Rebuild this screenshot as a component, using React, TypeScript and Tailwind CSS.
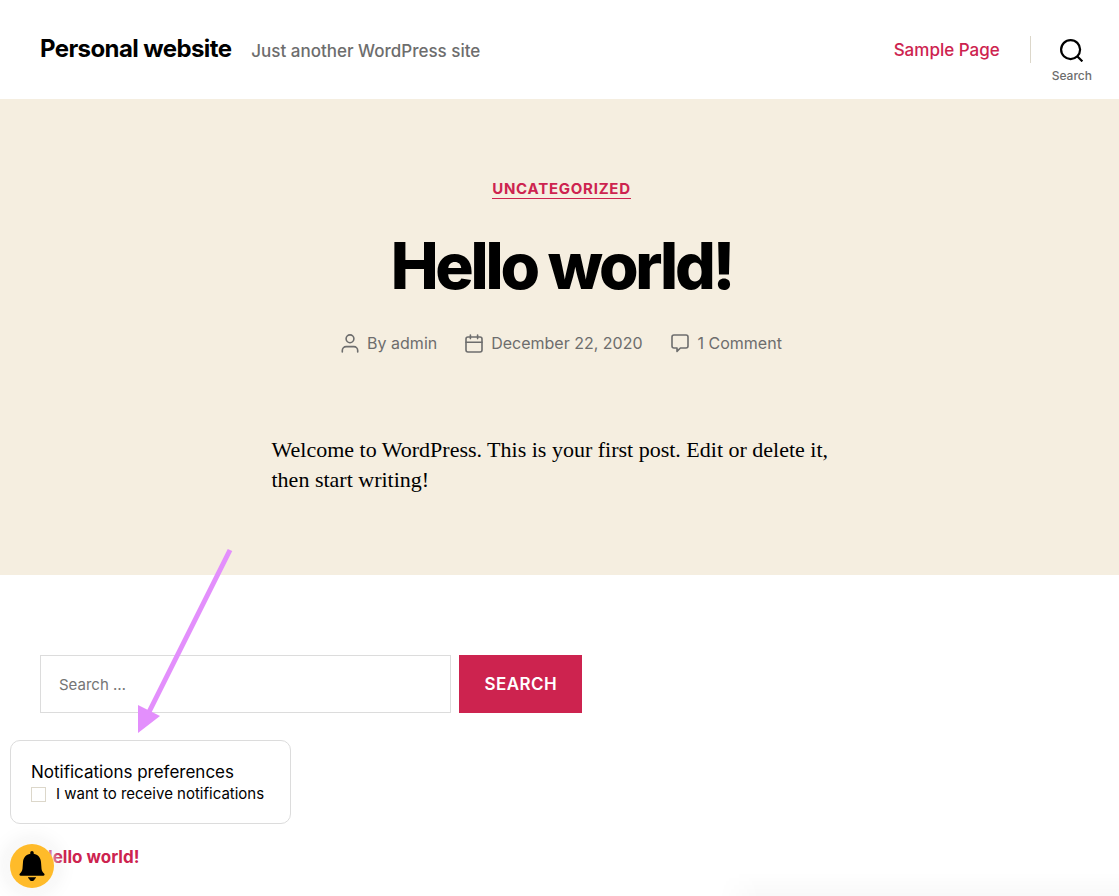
function SearchIcon() {
  return (
    <svg width="23" height="23" viewBox="0 0 23 23" fill="none" stroke="currentColor" strokeWidth="2.2" aria-hidden="true">
      <circle cx="10.6" cy="10.6" r="9.5" />
      <path d="M17.2 17.2 22.4 22.4" />
    </svg>
  );
}

function UserIcon() {
  return (
    <svg width="18" height="19" viewBox="0 0 18 19" fill="none" stroke="currentColor" strokeWidth="1.6" strokeLinecap="round" aria-hidden="true">
      <circle cx="9" cy="4.8" r="3.9" />
      <path d="M1.300 18v-1.600a3.800 3.800 0 0 1 3.800-3.800h7.800a3.800 3.800 0 0 1 3.800 3.800V18" />
    </svg>
  );
}

function CalendarIcon() {
  return (
    <svg width="18" height="19" viewBox="0 0 18 19" fill="none" stroke="currentColor" strokeWidth="1.6" strokeLinecap="round" aria-hidden="true">
      <rect x="1" y="3" width="16" height="15" rx="2" />
      <path d="M1 8.2h16M5.400 1v3.600M12.600 1v3.600" />
    </svg>
  );
}

function CommentIcon() {
  return (
    <svg width="19" height="19" viewBox="0 0 19 19" fill="none" stroke="currentColor" strokeWidth="1.6" strokeLinejoin="round" aria-hidden="true">
      <path d="M3 1h12a2 2 0 0 1 2 2v9a2 2 0 0 1-2 2H9.400L6 17.400V14H3a2 2 0 0 1-2-2V3a2 2 0 0 1 2-2z" />
    </svg>
  );
}

function BellIcon() {
  return (
    <svg width="26" height="30" viewBox="0 0 26 30" fill="currentColor" aria-hidden="true">
      <path d="M13 0c1 0 1.7.8 1.7 1.7v1.1c4.3.8 7 4 7.3 8.2l.5 6.5c.2 2.3 1 3.6 2.6 5 .9.9.5 2.3-.9 2.300H1.800c-1.400 0-1.800-1.400-.9-2.300 1.600-1.400 2.400-2.700 2.600-5l.5-6.500c.3-4.200 3-7.400 7.300-8.200V1.700C11.300.8 12 0 13 0z" />
      <path d="M9 26.200h8c0 1-.6 1.300-1.100 1.500-.4 1.400-1.500 2.300-2.900 2.300s-2.500-.9-2.900-2.300c-.5-.2-1.100-.5-1.100-1.500z" />
    </svg>
  );
}

export default function App() {
  return (
    <div className="relative min-h-screen overflow-hidden bg-white font-['Inter',sans-serif] text-black">
      <header className="flex items-start justify-between pr-[27px] pl-10">
        <div className="flex items-baseline gap-5 pt-[33px] pb-8">
          <a href="#home" className="text-2xl leading-8 font-bold tracking-tight">Personal website</a>
          <p className="text-[17px] leading-8 font-medium text-[#6d6d6d]">Just another WordPress site</p>
        </div>
        <div className="flex items-start pt-9">
          <nav aria-label="Main">
            <a href="#sample" className="block text-[17px] leading-7 font-medium text-[#cd234f]">Sample Page</a>
          </nav>
          <span className="ml-[30px] h-[27px] w-px bg-[#dcd7ca]" />
          <button type="button" className="ml-[21px] flex flex-col items-center gap-1 pt-[3px] text-black">
            <SearchIcon />
            <span className="text-xs leading-5 font-medium text-[#6d6d6d]">Search</span>
          </button>
        </div>
      </header>

      <main>
        <article className="flex flex-col items-center bg-[#f5eee0] pt-20 pr-10 pb-20 pl-11">
          <a href="#uncategorized" className="border-b border-[#cd234f] text-[15px] leading-[19px] font-bold tracking-wider text-[#cd234f] uppercase">Uncategorized</a>
          <h1 className="mt-8 text-[64px] leading-[70px] font-extrabold tracking-tighter">Hello world!</h1>
          <ul className="mt-[30px] flex flex-wrap gap-7 text-base leading-6 text-[#6d6d6d]">
            <li className="flex items-center gap-2"><UserIcon /><span>By <a href="#admin">admin</a></span></li>
            <li className="flex items-center gap-2"><CalendarIcon /><a href="#date">December 22, 2020</a></li>
            <li className="flex items-center gap-2"><CommentIcon /><a href="#comments">1 Comment</a></li>
          </ul>
          <p className="mt-20 w-full max-w-[580px] font-['Liberation_Serif',serif] text-[22px] leading-[30px]">
            Welcome to WordPress. This is your first post. Edit or delete it, then start writing!
          </p>
        </article>

        <section className="px-10 pt-20">
          <form className="flex w-full max-w-[542px] gap-2" onSubmit={(event) => event.preventDefault()}>
            <input type="search" aria-label="Search" placeholder="Search …" className="h-[58px] min-w-0 flex-1 border border-[#dcdcdc] bg-white px-[18px] text-[15px] outline-none placeholder:text-[#757575]" />
            <button type="submit" className="h-[58px] bg-[#cd234f] px-[25px] text-[17px] leading-6 font-semibold tracking-wide text-white uppercase">Search</button>
          </form>
          <a href="#hello-world" className="mt-[132px] inline-block text-[17px] leading-6 font-bold text-[#cd234f]">Hello world!</a>
        </section>
      </main>

      <div className="pointer-events-none absolute right-0 bottom-0 h-6 w-[400px] bg-linear-to-b from-transparent to-black/[0.025] mask-l-from-90%" />

      <aside className="absolute bottom-2 left-[10px] flex flex-col items-start gap-5">
        <fieldset className="w-[281px] rounded-[10px] border border-[#dcdcdc] bg-white px-5 py-[19px]">
          <legend className="float-left w-full text-[17px] leading-6">Notifications preferences</legend>
          <label className="clear-both flex items-center gap-[10px] text-[15px] leading-5">
            <input type="checkbox" className="size-[15px] shrink-0 appearance-none border border-[#dcd7ca] bg-white checked:bg-[#cd234f]" />
            <span className="whitespace-nowrap">I want to receive notifications</span>
          </label>
        </fieldset>
        <button type="button" aria-label="Notifications" className="grid size-11 place-items-center rounded-full bg-[#ffbb2a] text-black shadow-[0_0_12px_2px_rgba(255,255,255,0.8),0_0_24px_rgba(0,0,0,0.12)]">
          <BellIcon />
        </button>
      </aside>

      <svg className="pointer-events-none absolute top-[548px] left-[136px]" width="98" height="186" viewBox="136 548 98 186" fill="#e38ffc" aria-hidden="true">
        <path d="M230 550 148 714" stroke="#e38ffc" strokeWidth="5" />
        <path d="M138 705v28l22-17z" />
      </svg>
    </div>
  );
}
